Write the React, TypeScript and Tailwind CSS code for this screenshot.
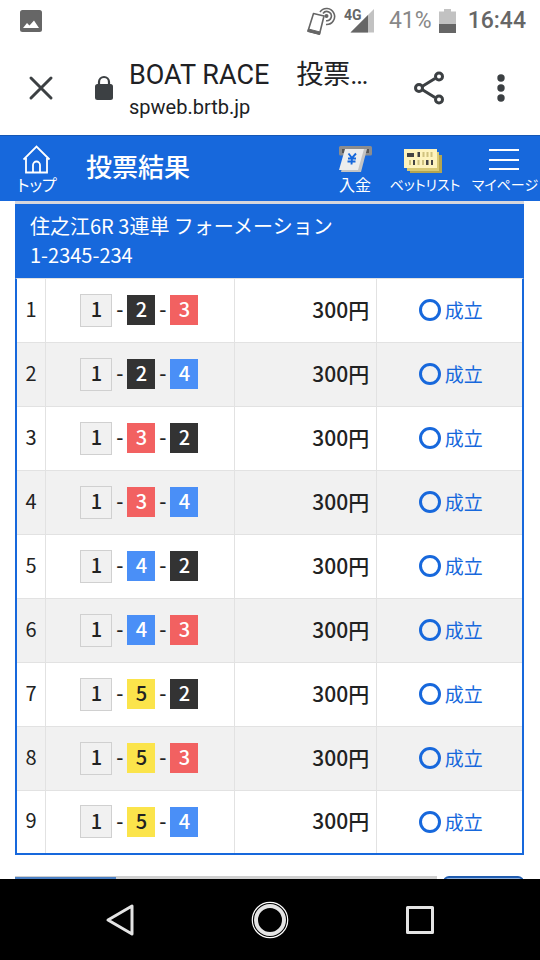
type Boat = 1 | 2 | 3 | 4 | 5;

const PRICE = "300円";

const bets: Boat[][] = [
  [1, 2, 3],
  [1, 2, 4],
  [1, 3, 2],
  [1, 3, 4],
  [1, 4, 2],
  [1, 4, 3],
  [1, 5, 2],
  [1, 5, 3],
  [1, 5, 4],
];

const boatStyles: Record<Boat, string> = {
  1: "h-[33px] w-8 border border-[#d0d0d0] bg-[#f1f1f1] text-[#222]",
  2: "h-[30px] w-7 bg-[#333] text-white",
  3: "h-[30px] w-7 bg-[#f26161] text-white",
  4: "h-[30px] w-7 bg-[#4a8ff7] text-white",
  5: "h-[30px] w-7 bg-[#fbe44b] text-[#222]",
};

function StatusBar() {
  return (
    <div className="flex h-[42px] items-center bg-white pl-5 pr-3.5 font-['Roboto',sans-serif] text-[23px] font-medium text-[#666]">
      <svg width="22" height="22" viewBox="0 0 22 22" className="mr-auto">
        <rect width="22" height="22" rx="2.5" fill="#666" />
        <path d="M3 18l4-5 2.500 2.500 4.500-5 5 7.500z" fill="#fff" />
      </svg>
      {/* phone with nfc waves */}
      <svg width="30" height="30" viewBox="0 0 30 30" fill="none" stroke="#666" className="mr-2">
        <path d="M7.500 7.500L18 10l-4.500 18L2 25z" strokeWidth="1.600" strokeLinejoin="round" />
        <path d="M2.500 23L14 26 13.500 28.500 1.800 25.500z" fill="#666" />
        <circle cx="20.500" cy="10" r="2" fill="#666" stroke="none" />
        <path d="M17 7.500a4.600 4.600 0 1 1 3 7.200M14 6a8 8 0 1 1 6 12.500" strokeWidth="1.600" />
      </svg>
      <svg width="31" height="26" viewBox="0 0 31 26" className="mr-3.5">
        <path d="M30 1v23.500H6.500z" fill="#c2c2c2" />
        <path d="M24 7v17.500H6.500z" fill="#666" />
        <text x="0" y="12" fontSize="14" fontWeight="700" fill="#666">
          4G
        </text>
      </svg>
      <span className="font-normal text-[#888]">41%</span>
      <svg width="17" height="26" viewBox="0 0 17 26" className="ml-[7px] mr-3">
        <path d="M5 1h7v2.500h5V25H0V3.500h5z" fill="#c2c2c2" />
        <path d="M0 16h17v9H0z" fill="#666" />
      </svg>
      <span>16:44</span>
    </div>
  );
}

function BrowserBar() {
  return (
    <div className="flex h-[93px] items-center bg-white pb-px pl-7 pr-8 text-[#202124]">
      <button type="button" aria-label="閉じる">
        <svg width="26" height="26" viewBox="0 0 26 26" fill="none" stroke="#3c4043" strokeWidth="3" strokeLinecap="round">
          <path d="M3 3l20 20M23 3L3 23" />
        </svg>
      </button>
      <svg width="20" height="26" viewBox="0 0 20 26" className="ml-10 mr-[15px] shrink-0">
        <rect x="1" y="9" width="18" height="16" rx="2.500" fill="#3c4043" />
        <path d="M5 10V7a5 5 0 0 1 10 0v3" fill="none" stroke="#3c4043" strokeWidth="2.200" />
      </svg>
      <div className="min-w-0 flex-1 pt-1.5 font-['Roboto','Noto_Sans_CJK_JP',sans-serif]">
        <p className="whitespace-nowrap text-[27px] leading-8">BOAT RACE　投票…</p>
        <p className="text-xl leading-8">spweb.brtb.jp</p>
      </div>
      <button type="button" aria-label="共有">
        <svg width="32" height="34" viewBox="0 0 32 34" fill="none" stroke="#3c4043" strokeWidth="3">
          <path d="M9 15.500L22 7.500M9 18.500l13 8" />
          <circle cx="6" cy="17" r="3.500" />
          <circle cx="26" cy="5.500" r="3.500" />
          <circle cx="26" cy="28.500" r="3.500" />
        </svg>
      </button>
      <button type="button" aria-label="メニュー" className="ml-[49px]">
        <svg width="14" height="28" viewBox="0 0 14 28" fill="#3c4043">
          <circle cx="7" cy="4" r="3.700" />
          <circle cx="7" cy="14" r="3.700" />
          <circle cx="7" cy="24" r="3.700" />
        </svg>
      </button>
    </div>
  );
}

function HomeIcon() {
  return (
    <svg width="28" height="30" viewBox="0 0 28 30" fill="none" stroke="#fff" strokeWidth="1.800">
      <path d="M.5 14.500L13.500 1.500l13 13" />
      <path d="M3 13v14.500h21V13" />
      <path d="M10 27.500V20a3.500 3.500 0 0 1 7 0v7.500" />
    </svg>
  );
}

function DepositIcon() {
  return (
    <svg width="34" height="30" viewBox="0 0 34 30">
      <rect x="1" y="1" width="33" height="9.500" rx="1.500" fill="#8d8d8d" />
      <rect x="4" y="4" width="27" height="4" fill="#555" />
      <path d="M9 4h20l-6 23H3z" fill="#c4c4c4" />
      <path d="M7 4h19l-6 21H1z" fill="#ededed" />
      <path d="M10.500 8.500l3.500 4.500 4-4.500M10 13.500h8M9.500 16.500h8M14 13l-.5 6.500" fill="none" stroke="#1768dc" strokeWidth="1.900" />
    </svg>
  );
}

function BetListIcon() {
  return (
    <svg width="42" height="30" viewBox="0 0 42 30">
      <path d="M6 10h32v18H6z" fill="#b5a550" />
      <path d="M3 7h32v19H3z" fill="#d8c974" />
      <path d="M0 4h33v19H0z" fill="#fdf3bd" />
      <path d="M3 8h7v4H3zM13.500 7h2.500v5h-2.500zM9 15h2v5H9zM22 15h2.500v5H22zM27 15h2v5h-2z" fill="#444" />
      <path d="M18.500 7h2v5h-2zM22.500 7h2v5h-2zM26.500 7h2v5h-2zM5 15h2v5H5zM13.500 15h2v5h-2zM18 15h2v5h-2z" fill="#cfc27f" />
    </svg>
  );
}

function MenuIcon() {
  return (
    <svg width="32" height="30" viewBox="0 0 32 30" fill="none" stroke="#fff" strokeWidth="2">
      <path d="M0 5h30M0 15h30M0 24h30" />
    </svg>
  );
}

function AppHeader() {
  const item =
    "flex flex-col items-center whitespace-nowrap leading-[18px] [font-feature-settings:'palt']";

  return (
    <header className="flex h-[66px] items-center border-t border-[#1557b5] bg-[#1768dc] text-white">
      <a href="#top" className={`${item} w-[74px] text-base`}>
        <HomeIcon />
        トップ
      </a>
      <h1 className="ml-3 pb-1.5 text-[26px] font-medium leading-8">投票結果</h1>
      <a href="#deposit" className={`${item} ml-auto w-[50px] text-base`}>
        <DepositIcon />
        入金
      </a>
      <a href="#betlist" className={`${item} w-[90px] text-sm`}>
        <BetListIcon />
        ベットリスト
      </a>
      <a href="#mypage" className={`${item} w-[70px] text-sm`}>
        <MenuIcon />
        マイページ
      </a>
    </header>
  );
}

function Combination({ boats }: { boats: Boat[] }) {
  return (
    <div className="flex items-center justify-center text-xl font-medium leading-7">
      {boats.map((boat, i) => (
        <div key={boat} className="flex items-center">
          {i > 0 && <span className="w-[15px] pb-0.5 text-center">-</span>}
          <span className={`flex items-center justify-center pb-0.5 ${boatStyles[boat]}`}>{boat}</span>
        </div>
      ))}
    </div>
  );
}

function BetTable() {
  return (
    <table className="w-full table-fixed border-separate border-spacing-0 border-2 border-t border-[#1768dc] border-t-[#e2e2e2] text-[#222]">
      <caption className="bg-[#1768dc] px-[15px] pb-[9px] pt-[7px] text-left text-xl leading-[29px] text-white">
        住之江6R 3連単 フォーメーション
        <br />
        1-2345-234
      </caption>
      <colgroup>
        <col className="w-[29px]" />
        <col className="w-[37.4%]" />
        <col className="w-[28.2%]" />
        <col />
      </colgroup>
      <tbody>
        {bets.map((boats, i) => (
          <tr
            key={boats.join("-")}
            className="h-16 odd:bg-white even:bg-[#f1f1f1] last:h-[62px] [&>td]:border-b [&>td]:border-[#e2e2e2] last:[&>td]:border-b-0"
          >
            <td className="border-r pb-1 text-center text-xl leading-7">{i + 1}</td>
            <td className="border-r pb-px pr-px">
              <Combination boats={boats} />
            </td>
            <td className="border-r pb-1 pr-[7px] text-right text-[21px] font-medium leading-7">{PRICE}</td>
            <td className="pb-px pl-0.5 text-[#1768dc]">
              <div className="flex items-center justify-center gap-1 text-[19px] leading-7">
                <span className="size-[22px] rounded-full border-3 border-[#1768dc]" />
                成立
              </div>
            </td>
          </tr>
        ))}
      </tbody>
    </table>
  );
}

function NavigationBar() {
  return (
    <nav className="grid h-[81px] grid-cols-3 place-items-center bg-black px-[45px]">
      <button type="button" aria-label="戻る">
        <svg width="30" height="34" viewBox="0 0 30 34" fill="none" stroke="#e4e4e4" strokeWidth="3" strokeLinejoin="round">
          <path d="M27 3v28L3 17z" />
        </svg>
      </button>
      <button type="button" aria-label="ホーム">
        <svg width="38" height="38" viewBox="0 0 38 38" fill="none">
          <circle cx="19" cy="19" r="17.700" stroke="#fff" strokeWidth="1.200" />
          <circle cx="19" cy="19" r="14" stroke="#e4e4e4" strokeWidth="4" />
        </svg>
      </button>
      <button type="button" aria-label="アプリ履歴">
        <svg width="30" height="30" viewBox="0 0 30 30" fill="none" stroke="#e4e4e4" strokeWidth="3" strokeLinejoin="round">
          <rect x="2.500" y="2.500" width="25" height="25" />
        </svg>
      </button>
    </nav>
  );
}

export default function App() {
  return (
    <div className="flex min-h-screen flex-col bg-white font-['Noto_Sans_CJK_JP',sans-serif]">
      <StatusBar />
      <BrowserBar />
      <AppHeader />
      <main className="flex flex-1 flex-col pl-[15px] pr-4">
        <div className="h-[3px] bg-[#d6d6dc]" />
        <BetTable />
        {/* top edge of the footer buttons */}
        <div className="mt-auto flex h-[3px] justify-between overflow-hidden">
          <div className="flex w-[83%] bg-[#cfcfcf]">
            <div className="mt-px w-[24%] bg-[#4a7fc4]" />
          </div>
          <div className="h-8 w-[16%] rounded-md border-2 border-[#1f5cb0] bg-[#8fb0dc]" />
        </div>
      </main>
      <NavigationBar />
    </div>
  );
}
